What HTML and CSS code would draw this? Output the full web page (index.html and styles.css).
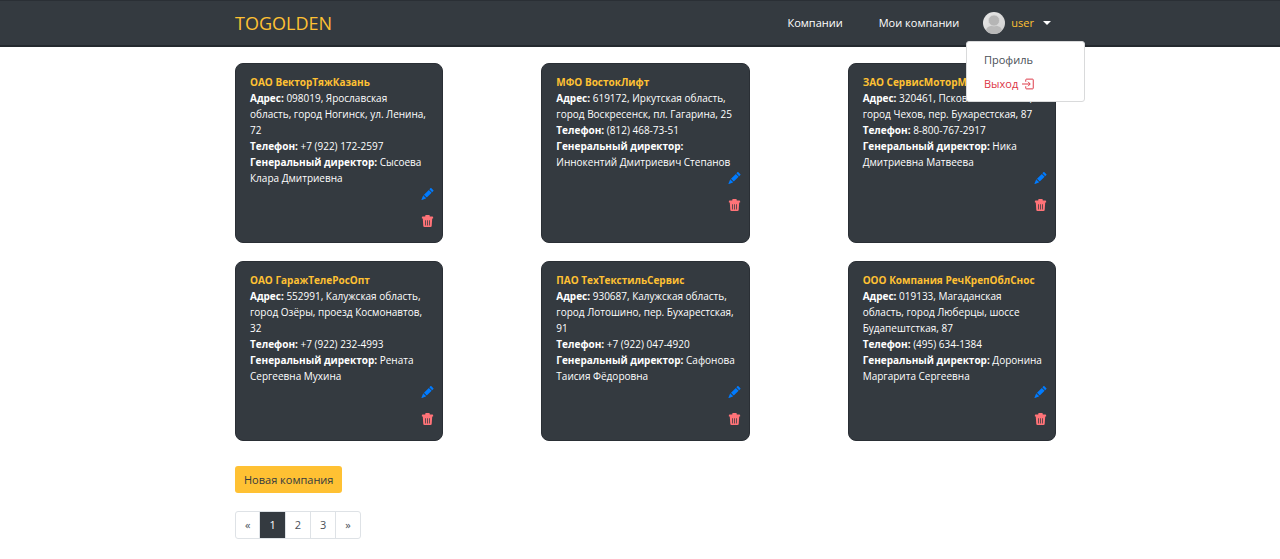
FILE: index.html
```html
<!DOCTYPE html>
<html lang="ru">
<head>
<meta charset="utf-8">
<meta name="viewport" content="width=device-width, initial-scale=1">
<title>TOGOLDEN</title>
<link rel="stylesheet" href="styles.css">
</head>
<body>
<svg class="sprite" aria-hidden="true">
  <symbol id="pencil" viewBox="0 0 16 16"><path d="M12.854.146a.5.5 0 0 0-.707 0L10.5 1.793 14.207 5.5l1.647-1.646a.5.5 0 0 0 0-.708l-3-3zm.646 6.061L9.793 2.5 3.293 9H3.5a.5.5 0 0 1 .5.5v.5h.5a.5.5 0 0 1 .5.5v.5h.5a.5.5 0 0 1 .5.5v.5h.5a.5.5 0 0 1 .5.5v.207l6.5-6.5zm-7.468 7.468A.5.5 0 0 1 6 13.500V13h-.5a.5.5 0 0 1-.5-.5V12h-.5a.5.5 0 0 1-.5-.5V11h-.5a.5.5 0 0 1-.5-.5V10h-.5a.499.499 0 0 1-.175-.032l-.179.178a.5.5 0 0 0-.11.168l-2 5a.5.5 0 0 0 .65.65l5-2a.5.5 0 0 0 .168-.11l.178-.178z"/></symbol>
  <symbol id="trash" viewBox="0 0 16 16"><path fill-rule="evenodd" d="M6 0h4a1 1 0 0 1 1 1v1h3.500a1 1 0 0 1 1 1v1.500h-15V3a1 1 0 0 1 1-1H5V1a1 1 0 0 1 1-1zM1.700 4.500h12.600l-.7 10a1.600 1.600 0 0 1-1.600 1.500H4a1.600 1.600 0 0 1-1.600-1.500zM4.700 7l.4 7h1L5.700 7zM7.500 7v7h1V7zM10.300 7l-.4 7h1l.4-7z"/></symbol>
</svg>
<header class="navbar">
  <div class="container navbar-inner">
    <a class="brand" href="#">TOGOLDEN</a>
    <nav class="nav">
      <a class="nav-link" href="#">Компании</a>
      <a class="nav-link" href="#">Мои компании</a>
      <div class="user">
        <button class="user-toggle" type="button" aria-expanded="true" aria-controls="user-menu">
          <svg class="avatar" viewBox="0 0 44 44" aria-hidden="true">
            <defs>
              <clipPath id="round"><circle cx="22" cy="22" r="22"/></clipPath>
              <linearGradient id="rim" x1="0" y1="0" x2="1" y2="1"><stop offset="0" stop-color="#e8e8e8"/><stop offset="1" stop-color="#cfcfcf"/></linearGradient>
            </defs>
            <g clip-path="url(#round)">
              <rect width="44" height="44" fill="url(#rim)"/>
              <path d="M6 44V38q0-8 9-10h14q9 2 9 10v6z" fill="#b9b9b9"/>
              <circle cx="22" cy="17" r="11" fill="#b5b5b5" stroke="#d8d8d8" stroke-width="1.500"/>
            </g>
          </svg>
          <span>user</span>
          <span class="caret"></span>
        </button>
        <div class="menu" id="user-menu">
          <a class="menu-item" href="#">Профиль</a>
          <a class="menu-item menu-exit" href="#">Выход
            <svg class="exit-icon" viewBox="0 0 16 16" aria-hidden="true"><path d="M5 5V2.500q0-1 1-1h8q1 0 1 1v11q0 1-1 1H6q-1 0-1-1V11M0 8h10.500M8 5l3 3-3 3" fill="none" stroke="currentColor" stroke-width="1.300"/></svg>
          </a>
        </div>
      </div>
    </nav>
  </div>
</header>
<main class="container">
  <section class="cards">
    <article class="card">
      <a class="card-title" href="#">ОАО ВекторТяжКазань</a>
      <p><b>Адрес:</b> 098019, Ярославская область, город Ногинск, ул. Ленина, 72</p>
      <p><b>Телефон:</b> +7 (922) 172-2597</p>
      <p><b>Генеральный директор:</b> Сысоева Клара Дмитриевна</p>
      <div class="actions">
        <a class="edit" href="#" aria-label="Изменить"><svg class="icon"><use href="#pencil"/></svg></a>
        <button class="delete" type="button" aria-label="Удалить"><svg class="icon"><use href="#trash"/></svg></button>
      </div>
    </article>
    <article class="card">
      <a class="card-title" href="#">МФО ВостокЛифт</a>
      <p><b>Адрес:</b> 619172, Иркутская область, город Воскресенск, пл. Гагарина, 25</p>
      <p><b>Телефон:</b> (812) 468-73-51</p>
      <p><b>Генеральный директор:</b> Иннокентий Дмитриевич Степанов</p>
      <div class="actions">
        <a class="edit" href="#" aria-label="Изменить"><svg class="icon"><use href="#pencil"/></svg></a>
        <button class="delete" type="button" aria-label="Удалить"><svg class="icon"><use href="#trash"/></svg></button>
      </div>
    </article>
    <article class="card">
      <a class="card-title" href="#">ЗАО СервисМоторМаш</a>
      <p><b>Адрес:</b> 320461, Псковская область, город Чехов, пер. Бухарестская, 87</p>
      <p><b>Телефон:</b> 8-800-767-2917</p>
      <p><b>Генеральный директор:</b> Ника Дмитриевна Матвеева</p>
      <div class="actions">
        <a class="edit" href="#" aria-label="Изменить"><svg class="icon"><use href="#pencil"/></svg></a>
        <button class="delete" type="button" aria-label="Удалить"><svg class="icon"><use href="#trash"/></svg></button>
      </div>
    </article>
    <article class="card">
      <a class="card-title" href="#">ОАО ГаражТелеРосОпт</a>
      <p><b>Адрес:</b> 552991, Калужская область, город Озёры, проезд Космонавтов, 32</p>
      <p><b>Телефон:</b> +7 (922) 232-4993</p>
      <p><b>Генеральный директор:</b> Рената Сергеевна Мухина</p>
      <div class="actions">
        <a class="edit" href="#" aria-label="Изменить"><svg class="icon"><use href="#pencil"/></svg></a>
        <button class="delete" type="button" aria-label="Удалить"><svg class="icon"><use href="#trash"/></svg></button>
      </div>
    </article>
    <article class="card">
      <a class="card-title" href="#">ПАО ТехТекстильСервис</a>
      <p><b>Адрес:</b> 930687, Калужская область, город Лотошино, пер. Бухарестская, 91</p>
      <p><b>Телефон:</b> +7 (922) 047-4920</p>
      <p><b>Генеральный директор:</b> Сафонова Таисия Фёдоровна</p>
      <div class="actions">
        <a class="edit" href="#" aria-label="Изменить"><svg class="icon"><use href="#pencil"/></svg></a>
        <button class="delete" type="button" aria-label="Удалить"><svg class="icon"><use href="#trash"/></svg></button>
      </div>
    </article>
    <article class="card">
      <a class="card-title" href="#">ООО Компания РечКрепОблСнос</a>
      <p><b>Адрес:</b> 019133, Магаданская область, город Люберцы, шоссе Будапештсткая, 87</p>
      <p><b>Телефон:</b> (495) 634-1384</p>
      <p><b>Генеральный директор:</b> Доронина Маргарита Сергеевна</p>
      <div class="actions">
        <a class="edit" href="#" aria-label="Изменить"><svg class="icon"><use href="#pencil"/></svg></a>
        <button class="delete" type="button" aria-label="Удалить"><svg class="icon"><use href="#trash"/></svg></button>
      </div>
    </article>
  </section>
  <button class="new-company" type="button">Новая компания</button>
  <nav class="pagination" aria-label="Страницы">
    <a class="page" href="#">«</a>
    <a class="page page-active" href="#" aria-current="page">1</a>
    <a class="page" href="#">2</a>
    <a class="page" href="#">3</a>
    <a class="page" href="#">»</a>
  </nav>
</main>
</body>
</html>
```

FILE: styles.css
```css
* { box-sizing: border-box; }
body {
  margin: 0;
  background: #fff;
  color: #343a40;
  font: 11px/18px "Open Sans", "Noto Sans", sans-serif;
}
a { color: inherit; text-decoration: none; }
button { font: inherit; color: inherit; background: none; border: 0; padding: 0; cursor: pointer; }
p { margin: 0; }
.sprite { display: none; }

.container { max-width: 832px; margin: 0 auto; padding-left: 11px; }

.navbar { background: #343a40; border-top: 1px solid #2a2f35; border-bottom: 2px solid #24292e; }
.navbar-inner { display: flex; align-items: center; justify-content: space-between; min-height: 44px; }
.brand { color: #ffc133; font-size: 18px; line-height: 24px; }
.nav { display: flex; align-items: center; padding-right: 5px; color: #fff; }
.nav-link { margin-right: 36px; }
.nav-link:nth-child(2) { margin-right: 24px; }
.user { position: relative; }
.user-toggle { display: flex; align-items: center; gap: 6px; color: #ffc133; }
.avatar { width: 22px; height: 22px; }
.caret { margin-left: 3px; border: 4px solid transparent; border-top-color: #fff; border-bottom: 0; }
.menu {
  position: absolute;
  top: 100%;
  right: -34px;
  z-index: 1;
  width: 119px;
  margin-top: 7px;
  padding: 6px 0 5px;
  background: #fff;
  border: 1px solid #d9dadb;
  border-radius: 3px;
}
.menu-item { display: flex; align-items: center; gap: 4px; padding: 3px 17px; color: #495057; }
.menu-exit { color: #dc3545; }
.exit-icon { width: 12px; height: 12px; }

.cards { display: grid; grid-template-columns: repeat(3, 1fr); gap: 18px 98px; padding-top: 16px; }
.card {
  min-height: 180px;
  padding: 10px 8px 8px 14px;
  background: #343a40;
  border: 1px solid #2a2f35;
  border-radius: 8px;
  color: #fff;
  font-size: 10px;
  line-height: 16px;
}
.card p { padding-right: 4px; }
.card-title { display: block; color: #ffc133; font-weight: 700; }
.actions { display: flex; flex-direction: column; align-items: flex-end; gap: 15px; padding-top: 2px; }
.edit, .delete { display: block; height: 12px; line-height: 0; }
.edit { color: #007bff; }
.delete { color: #ff7378; }
.icon { width: 13px; height: 12px; fill: currentColor; }

.new-company { display: block; margin-top: 25px; padding: 5px 9px 4px; background: #ffc133; border-radius: 3px; }
.pagination { display: flex; width: max-content; margin-top: 18px; border: 1px solid #dee2e6; border-radius: 3px; }
.page { padding: 4px 9px; color: #495057; }
.page + .page { border-left: 1px solid #dee2e6; }
.page-active { background: #343a40; color: #fff; }
```
